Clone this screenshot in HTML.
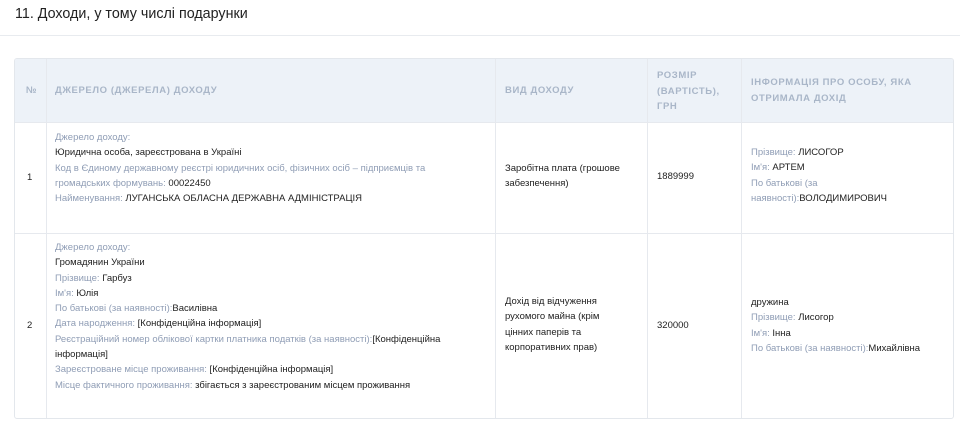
<!DOCTYPE html>
<html><head><meta charset="utf-8"><style>
body{margin:0;width:960px;height:434px;background:#fff;font-family:"Liberation Sans",sans-serif;position:relative;overflow:hidden}
.t{position:absolute;left:15px;top:6px;font-size:14.3px;color:#222}
.hr{position:absolute;left:0;top:35px;width:960px;height:1px;background:#e8ebef}
.tb{position:absolute;left:14px;top:58px;width:938px;height:359px;border:1px solid #e3e7ec;border-radius:3px;overflow:hidden}
.hd{position:absolute;left:0;top:0;width:938px;height:63px;background:#edf2f8}
.v{position:absolute;top:0;width:1px;height:359px;background:#e6e9ee}
.h{position:absolute;top:63px;left:0;width:938px;height:1px;background:#e6e9ee}
.hl{position:absolute;font-size:9.5px;font-weight:bold;color:#a9b6c8;letter-spacing:0.6px;line-height:15.5px}
.c{position:absolute;font-size:9.5px;line-height:15.3px;color:#222}
.l{color:#8f9db5}
</style></head><body>
<div class="t">11. Доходи, у тому числі подарунки</div>
<div class="hr"></div>
<div class="tb">
<div class="hd"></div>
<div class="h"></div><div class="h" style="top:174px"></div>
<div class="v" style="left:31px"></div><div class="v" style="left:480px"></div><div class="v" style="left:632px"></div><div class="v" style="left:726px"></div>
<div class="hl" style="left:11px;top:24px;letter-spacing:0">№</div>
<div class="hl" style="left:40px;top:24px">ДЖЕРЕЛО (ДЖЕРЕЛА) ДОХОДУ</div>
<div class="hl" style="left:490px;top:24px">ВИД ДОХОДУ</div>
<div class="hl" style="left:642px;top:9px;width:80px">РОЗМІР (ВАРТІСТЬ), ГРН</div>
<div class="hl" style="left:736px;top:16px;width:190px">ІНФОРМАЦІЯ ПРО ОСОБУ, ЯКА ОТРИМАЛА ДОХІД</div>

<div class="c" style="left:12px;top:111px">1</div>
<div class="c" style="left:40px;top:71px;width:430px"><span class="l">Джерело доходу:</span><br>Юридична особа, зареєстрована в Україні<br><span class="l">Код в Єдиному державному реєстрі юридичних осіб, фізичних осіб – підприємців та<br>громадських формувань:</span> 00022450<br><span class="l">Найменування:</span> ЛУГАНСЬКА ОБЛАСНА ДЕРЖАВНА АДМІНІСТРАЦІЯ</div>
<div class="c" style="left:490px;top:102px;width:130px">Заробітна плата (грошове забезпечення)</div>
<div class="c" style="left:642px;top:110px">1889999</div>
<div class="c" style="left:736px;top:86px;width:140px"><span class="l">Прізвище:</span> ЛИСОГОР<br><span class="l">Ім'я:</span> АРТЕМ<br><span class="l">По батькові (за наявності):</span>ВОЛОДИМИРОВИЧ</div>

<div class="c" style="left:12px;top:259px">2</div>
<div class="c" style="left:40px;top:181px;width:440px"><span class="l">Джерело доходу:</span><br>Громадянин України<br><span class="l">Прізвище:</span> Гарбуз<br><span class="l">Ім'я:</span> Юлія<br><span class="l">По батькові (за наявності):</span>Василівна<br><span class="l">Дата народження:</span> [Конфіденційна інформація]<br><span class="l">Реєстраційний номер облікової картки платника податків (за наявності):</span>[Конфіденційна<br>інформація]<br><span class="l">Зареєстроване місце проживання:</span> [Конфіденційна інформація]<br><span class="l">Місце фактичного проживання:</span> збігається з зареєстрованим місцем проживання</div>
<div class="c" style="left:490px;top:235px;width:110px">Дохід від відчуження рухомого майна (крім цінних паперів та корпоративних прав)</div>
<div class="c" style="left:642px;top:259px">320000</div>
<div class="c" style="left:736px;top:236px;width:200px">дружина<br><span class="l">Прізвище:</span> Лисогор<br><span class="l">Ім'я:</span> Інна<br><span class="l">По батькові (за наявності):</span>Михайлівна</div>
</div>
</body></html>
